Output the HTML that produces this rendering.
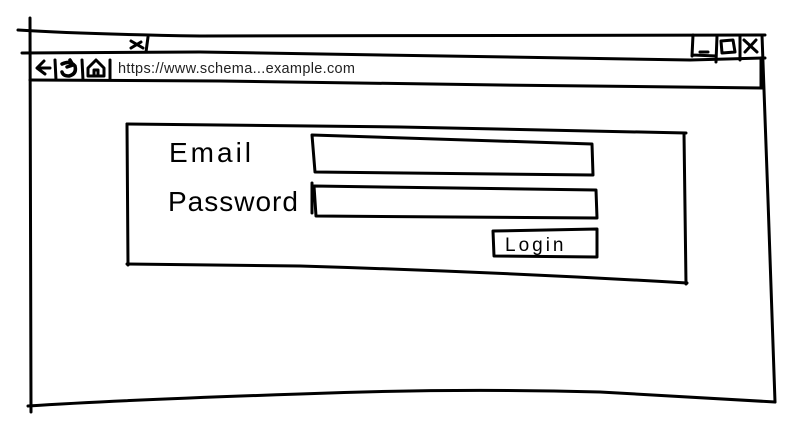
<!DOCTYPE html>
<html><head><style>
html,body{margin:0;padding:0;background:#fff;width:801px;height:433px;overflow:hidden}
svg{display:block}
</style></head><body>
<svg width="801" height="433" viewBox="0 0 801 433" fill="none" stroke="#000" stroke-width="3" stroke-linecap="round" stroke-linejoin="round">
<!-- outer frame -->
<path d="M30 18 L31 412"/>
<path d="M18 30 Q80 34 200 36 L765 35"/>
<path d="M762 35 L768 200 L775 402"/>
<path d="M28 406 Q120 400 300 394 Q450 388 600 392 L775 402"/>
<path d="M22 53 L200 52 L690 60 L765 58"/>
<path d="M30 80 L220 81 L500 85 L762 88"/>
<path d="M761 58 L761 88"/>
<!-- title bar tab x -->
<path d="M131 41 L143 48 M131 48 L141 42 M148 37 L146 52"/>
<!-- window controls -->
<path d="M693 35 L692 56 M717 36 L716 62 M740 36 L740 60 M693 55 L716 56"/>
<path d="M700 52 L708 52"/>
<path d="M721 41 L733 40 L735 52 L722 53 Z"/>
<path d="M744 40 L757 52 M756 40 L745 52"/>
<!-- nav icons -->
<path d="M55 60 L56 80 M82 60 L83 80 M110 60 L110 80"/>
<path d="M50 68 L38 68 M44 61 L37 68 L45 74"/>
<path d="M62 64 Q70 60 75 66 Q77 74 69 76 Q63 76 62 72 M70 60 L73 65 L67 67" stroke-width="3.5"/>
<path d="M88 76 L88 68 L96 60 L104 68 L104 76 Z M94 76 L94 70 L98 70 L98 76"/>
<text x="118" y="73" font-family="Liberation Sans, sans-serif" font-size="14.5" fill="#222" stroke="none" textLength="237">https://www.schema...example.com</text>
<!-- form box -->
<path d="M127 124 L400 127 L686 133"/>
<path d="M127 124 L128 265"/>
<path d="M127 264 L300 266 Q500 272 687 283"/>
<path d="M684 133 L686 284"/>
<text x="169" y="162" font-family="Liberation Sans, sans-serif" font-size="28" fill="#000" stroke="none" letter-spacing="3">Email</text>
<text x="168" y="211" font-family="Liberation Sans, sans-serif" font-size="28" fill="#000" stroke="none" letter-spacing="1">Password</text>
<!-- email input -->
<path d="M312 135 L592 144 L593 175 L315 172 Z"/>
<!-- password input -->
<path d="M314 186 L596 190 L597 218 L316 216 Z M312 183 L312 213"/>
<!-- login button -->
<path d="M493 231 L597 229 L597 257 L494 256 Z"/>
<text x="505" y="251" font-family="Liberation Sans, sans-serif" font-size="19" fill="#000" stroke="none" letter-spacing="3">Login</text>
</svg>
</body></html>
